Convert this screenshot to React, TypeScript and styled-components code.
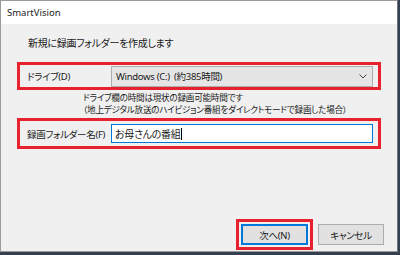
import React from "react";
import styled, { createGlobalStyle } from "styled-components";

const GlobalStyle = createGlobalStyle`
  html, body { margin: 0; padding: 0; }
  body {
    width: 400px;
    height: 255px;
    background: #34404f;
    overflow: hidden;
    font-family: "Noto Sans", "Noto Sans CJK JP", sans-serif;
    font-feature-settings: "palt";
  }
`;

const Window = styled.div`
  width: 396px;
  height: 250px;
  border: 1px solid #9a9a9a;
  border-right-color: #6d7480;
  background: #f0f0f0;
  display: flex;
  flex-direction: column;
`;

const TitleBar = styled.div`
  height: 23px;
  background: #ffffff;
  display: flex;
  align-items: center;
  padding-left: 6px;
  font-size: 9.5px;
  color: #1a1a1a;
`;

const Body = styled.div`
  flex: 1;
  display: flex;
  flex-direction: column;
  padding: 0 13px 1px 16px;
`;

const Heading = styled.div`
  margin: 12px 0 0 11px;
  height: 14px;
  line-height: 14px;
  font-family: "Noto Sans CJK JP", sans-serif;
  font-size: 10px;
  letter-spacing: -0.3px;
  color: #1a1a1a;
`;

const Highlight = styled.div<{ $mt: number; $h: number }>`
  margin-top: ${(p) => p.$mt}px;
  margin-right: 3px;
  height: ${(p) => p.$h}px;
  border: 3px solid #e8212e;
  display: flex;
  align-items: center;
  padding: 0 5px 0 7px;
`;

const Label = styled.div`
  width: 84px;
  flex-shrink: 0;
  white-space: nowrap;
  font-family: "Noto Sans", "Noto Sans CJK JP", sans-serif;
  font-size: 9.5px;
  letter-spacing: -0.3px;
  color: #1a1a1a;
`;

const Combo = styled.div`
  flex: 1;
  height: 19px;
  border: 1px solid #adadad;
  background: #e5e5e5;
  display: flex;
  align-items: center;
  justify-content: space-between;
  padding: 0 5px 0 4px;
  color: #1a1a1a;
`;

const ComboText = styled.span`
  font-size: 9.5px;
  letter-spacing: -0.3px;
  white-space: pre;
  font-family: "Noto Sans", "Noto Sans CJK JP", sans-serif;
`;

const Notes = styled.div`
  margin: 1px 0 0 66px;
  display: flex;
  flex-direction: column;
`;

const NoteLine = styled.div`
  height: 12px;
  line-height: 12px;
  font-family: "Noto Sans CJK JP", sans-serif;
  font-size: 8.6px;
  letter-spacing: -0.25px;
  white-space: nowrap;
  color: #1a1a1a;
`;

const TextField = styled.div`
  flex: 1;
  height: 17px;
  border: 1px solid #0078d7;
  background: #ffffff;
  display: flex;
  align-items: center;
  padding-left: 3px;
  font-family: "Noto Sans CJK JP", sans-serif;
  font-size: 10px;
  letter-spacing: -0.3px;
  color: #1a1a1a;
`;

const Caret = styled.span`
  display: inline-block;
  width: 1px;
  height: 12px;
  margin-left: 1px;
  background: #000;
`;

const ButtonRow = styled.div`
  margin-top: auto;
  display: flex;
  align-items: center;
  justify-content: flex-end;
  gap: 5px;
`;

const ButtonFrame = styled.div`
  border: 3px solid #e8212e;
  padding: 2px;
  display: flex;
`;

const Button = styled.div<{ $focused?: boolean }>`
  width: ${(p) => (p.$focused ? 63 : 64)}px;
  height: ${(p) => (p.$focused ? 17 : 19)}px;
  border: ${(p) => (p.$focused ? "2px solid #0078d7" : "1px solid #adadad")};
  background: #e1e1e1;
  display: flex;
  align-items: center;
  justify-content: center;
  font-family: "Noto Sans", "Noto Sans CJK JP", sans-serif;
  font-size: 9.5px;
  letter-spacing: -0.3px;
  color: #1a1a1a;
`;

const Chevron = () => (
  <svg width="8" height="5" viewBox="0 0 8 5">
    <path d="M0.5 0.5 L4 4 L7.5 0.5" fill="none" stroke="#444" strokeWidth="1" />
  </svg>
);

export default function App() {
  return (
    <>
      <GlobalStyle />
      <Window>
        <TitleBar>SmartVision</TitleBar>
        <Body>
          <Heading>新規に録画フォルダーを作成します</Heading>
          <Highlight $mt={12} $h={22}>
            <Label>ドライブ(D)</Label>
            <Combo>
              <ComboText>Windows (C:)  (約385時間)</ComboText>
              <Chevron />
            </Combo>
          </Highlight>
          <Notes>
            <NoteLine>ドライブ欄の時間は現状の録画可能時間です</NoteLine>
            <NoteLine>（地上デジタル放送のハイビジョン番組をダイレクトモードで録画した場合）</NoteLine>
          </Notes>
          <Highlight $mt={3} $h={25}>
            <Label>録画フォルダー名(F)</Label>
            <TextField>
              お母さんの番組
              <Caret />
            </TextField>
          </Highlight>
          <ButtonRow>
            <ButtonFrame>
              <Button $focused>次へ(N)</Button>
            </ButtonFrame>
            <Button>キャンセル</Button>
          </ButtonRow>
        </Body>
      </Window>
    </>
  );
}
